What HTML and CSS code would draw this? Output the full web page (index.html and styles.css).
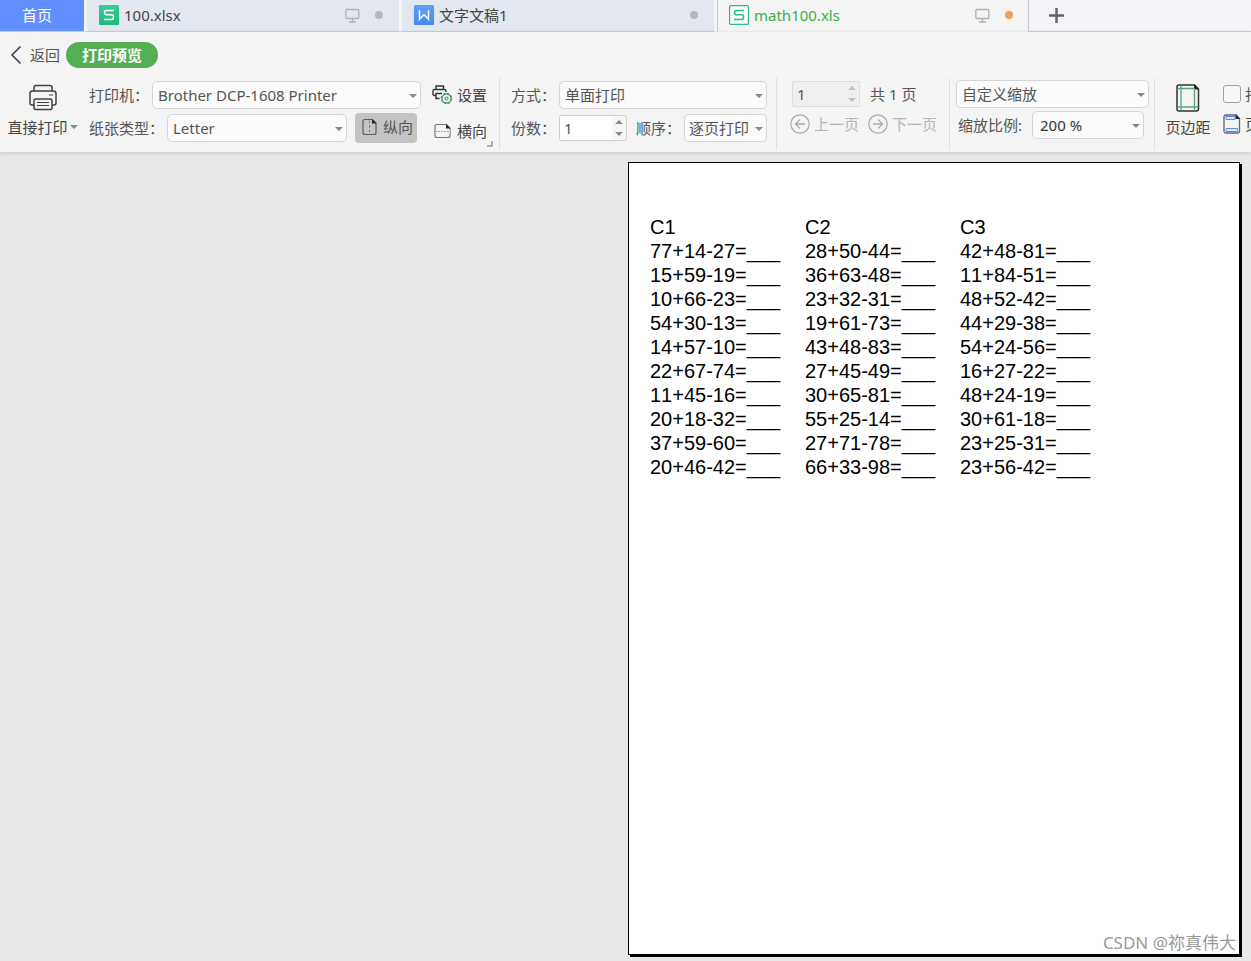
FILE: index.html
```html
<!DOCTYPE html>
<html lang="zh-CN">
<head>
<meta charset="utf-8">
<meta name="viewport" content="width=device-width, initial-scale=1">
<title>打印预览 - math100.xls</title>
<link rel="stylesheet" href="styles.css">
</head>
<body>
<nav class="tabs" aria-label="文档">
  <a class="tab tab-home" href="#home">首页</a>
  <a class="tab tab-doc" href="#doc1">
    <svg class="tab-logo" width="20" height="20" viewBox="0 0 20 20"><defs><linearGradient id="g1" x2="0" y2="1"><stop stop-color="#36cf93"/><stop offset="1" stop-color="#20b97b"/></linearGradient></defs><rect width="20" height="20" rx="1" fill="url(#g1)"/><path d="M15 5.500H7.500Q5.500 5.500 5.500 7.600Q5.500 9.800 7.500 9.800H12.500Q14.500 9.800 14.500 12Q14.500 14.500 12.500 14.500H5" fill="none" stroke="#fff" stroke-width="1.500"/></svg>
    <span class="tab-name">100.xlsx</span>
    <svg class="tab-screen" width="15" height="15" viewBox="0 0 15 15" fill="none" stroke="#b0b4be" stroke-width="1.300"><rect x=".8" y="1.500" width="13" height="9" rx="1"/><path d="M7.500 10.500v3M4 14h7"/></svg>
    <span class="dot"></span>
  </a>
  <a class="tab tab-doc" href="#doc2">
    <svg class="tab-logo" width="20" height="20" viewBox="0 0 20 20"><defs><linearGradient id="g2" x2="0" y2="1"><stop stop-color="#5aa0fa"/><stop offset="1" stop-color="#4589f0"/></linearGradient></defs><rect width="20" height="20" rx="1" fill="url(#g2)"/><path d="M5.500 5v9.300L10 9.500l4.500 4.800V5" fill="none" stroke="#fff" stroke-width="1.500"/></svg>
    <span class="tab-name">文字文稿1</span>
    <span class="dot"></span>
  </a>
  <a class="tab tab-active" href="#doc3" aria-current="page">
    <svg class="tab-logo" width="20" height="20" viewBox="0 0 20 20" fill="none" stroke="#28bd80"><rect x=".6" y=".6" width="18.800" height="18.800" rx="1" fill="#fff" stroke-width="1.200"/><path d="M15 5.500H7.500Q5.500 5.500 5.500 7.600Q5.500 9.800 7.500 9.800H12.500Q14.500 9.800 14.500 12Q14.500 14.500 12.500 14.500H5" stroke-width="1.500"/></svg>
    <span class="tab-name">math100.xls</span>
    <svg class="tab-screen" width="15" height="15" viewBox="0 0 15 15" fill="none" stroke="#b0b0b0" stroke-width="1.300"><rect x=".8" y="1.500" width="13" height="9" rx="1"/><path d="M7.500 10.500v3M4 14h7"/></svg>
    <span class="dot dot-unsaved"></span>
  </a>
  <div class="tab-rest">
    <button class="plain" type="button" aria-label="新建标签"><svg width="15" height="15" viewBox="0 0 15 15"><path d="M7.500 0v15M0 7.500h15" stroke="#606266" stroke-width="2.400"/></svg></button>
  </div>
</nav>

<header class="ribbon">
  <div class="crumbs">
    <button class="plain back" type="button"><svg width="12" height="20" viewBox="0 0 12 20"><path d="M10.500 1.500L2 10l8.500 8.500" fill="none" stroke="#3c3c3c" stroke-width="1.500"/></svg>返回</button>
    <button class="mode" type="button">打印预览</button>
  </div>
  <div class="tools">
    <button class="plain big big-print" type="button">
      <svg width="28" height="28" viewBox="0 0 28 28" fill="none" stroke="#414141" stroke-width="1.500"><path d="M5 7V3.500Q5 1.500 7 1.500H21Q23 1.500 23 3.500V7M5 21H3Q1 21 1 19V9.500Q1 7 3.500 7H24.500Q27 7 27 9.500V19Q27 21 25 21H23"/><rect x="5" y="15" width="18" height="10.500" rx="1.500"/><path d="M8 18.500h12M8 21.500h12M20 11h4" stroke-width="1.200"/></svg>
      <span class="with-arrow">直接打印<i class="arrow"></i></span>
    </button>

    <div class="group group-printer">
      <div class="row">
        <label class="label-printer" for="printer">打印机：</label>
        <span class="select grow"><select id="printer"><option>Brother DCP-1608 Printer</option></select><i class="arrow"></i></span>
      </div>
      <div class="row">
        <label class="label-paper" for="paper">纸张类型：</label>
        <span class="select select-paper"><select id="paper"><option>Letter</option></select><i class="arrow"></i></span>
        <button class="portrait" type="button" aria-pressed="true"><svg width="16" height="18" viewBox="0 0 16 18" fill="none"><path d="M3 1.500H10.500L14 5V14.500Q14 16.500 12 16.500H3Q1 16.500 1 14.500V3.500Q1 1.500 3 1.500Z" stroke="#5b5b5b" stroke-width="1.200"/><path d="M10 1L14.500 5.500H10Z" fill="#222"/><path d="M7.500 2.500v13" stroke="#4d9c70" stroke-dasharray="3 1.500"/></svg>纵向</button>
      </div>
    </div>

    <div class="group group-setup">
      <button class="plain item" type="button"><svg width="21" height="20" viewBox="0 0 21 20" fill="none"><g stroke="#333" stroke-width="1.400"><path d="M4 4.500V1H11.500V4.500M4 10.500H2.500Q1 10.500 1 9V6Q1 4.500 2.500 4.500H12.500Q14 4.500 14 6V7"/><path d="M10 8.500H4V13.500H7.500"/></g><g stroke="#4b9c6d"><circle cx="14.500" cy="13.500" r="4.500" stroke-width="1.300"/><circle cx="14.500" cy="13.500" r="1.500" stroke-width="1.200"/><circle cx="14.500" cy="13.500" r="5.300" stroke-dasharray="2.080 2.080" stroke-width="1.200"/></g></svg>设置</button>
      <button class="plain item item-landscape" type="button"><svg width="21" height="16" viewBox="0 0 21 16" fill="none"><path d="M5 1.500H14.500L18 5V12.500Q18 14.500 16 14.500H5Q3 14.500 3 12.500V3.500Q3 1.500 5 1.500Z" stroke="#777" stroke-width="1.200"/><path d="M3.700 8.500h14" stroke="#f4f4f4" stroke-width="3"/><path d="M14 1L18.500 5.500H14Z" fill="#222"/><path d="M3 8.500h16" stroke="#83b698" stroke-dasharray="2 1"/></svg>横向</button>
      <button class="plain launcher" type="button" aria-label="更多设置"><svg width="6" height="6" viewBox="0 0 6 6"><path d="M5 0v5H0" fill="none" stroke="#999" stroke-width="1.500"/></svg></button>
    </div>

    <div class="group group-mode">
      <div class="row">
        <label class="label-short" for="side">方式：</label>
        <span class="select grow"><select id="side"><option>单面打印</option></select><i class="arrow"></i></span>
      </div>
      <div class="row">
        <label class="label-short" for="copies">份数：</label>
        <span class="spin"><input id="copies" type="text" value="1"><span class="steps"><button type="button" aria-label="增加份数"><i class="arrow arrow-up"></i></button><button type="button" aria-label="减少份数"><i class="arrow"></i></button></span></span>
        <label class="label-short label-order" for="order">顺序：</label>
        <span class="select grow select-order"><select id="order"><option>逐页打印</option></select><i class="arrow"></i></span>
      </div>
    </div>

    <div class="group group-pages">
      <div class="row row-indent">
        <span class="spin spin-off"><input type="text" value="1" aria-label="页码" disabled><span class="steps"><button type="button" aria-label="后翻" disabled><i class="arrow arrow-up"></i></button><button type="button" aria-label="前翻" disabled><i class="arrow"></i></button></span></span>
        <span class="page-count">共 1 页</span>
      </div>
      <div class="row pager">
        <button class="plain turn" type="button" disabled><svg width="20" height="20" viewBox="0 0 20 20" fill="none" stroke="#adadad" stroke-width="1.300"><circle cx="10" cy="10" r="9.200"/><path d="M15 10H5.500M10 5.500L5.500 10l4.500 4.500"/></svg>上一页</button>
        <button class="plain turn" type="button" disabled><svg width="20" height="20" viewBox="0 0 20 20" fill="none" stroke="#adadad" stroke-width="1.300"><circle cx="10" cy="10" r="9.200"/><path d="M5 10h9.500M10 5.500l4.500 4.500-4.500 4.500"/></svg>下一页</button>
      </div>
    </div>

    <div class="group group-zoom">
      <div class="row">
        <span class="select grow"><select aria-label="缩放方式"><option>自定义缩放</option></select><i class="arrow"></i></span>
      </div>
      <div class="row row-scale">
        <label class="label-scale" for="scale">缩放比例:</label>
        <span class="select select-scale"><select id="scale"><option>200 %</option></select><i class="arrow"></i></span>
      </div>
    </div>

    <button class="plain big big-margin" type="button">
      <svg width="24" height="28" viewBox="0 0 24 28" fill="none"><path d="M3 1H18.500L22.500 5V25Q22.500 27 20.500 27H3Q1 27 1 25V3Q1 1 3 1Z" stroke="#333" stroke-width="1.500"/><path d="M18 0L23 5.500H18Z" fill="#222"/><path d="M5 1.500v25M18.500 5v21.500M2 4.500h17M2 23h20" stroke="#58a578" stroke-width="1.300"/></svg>
      <span>页边距</span>
    </button>

    <div class="group group-options">
      <label class="check"><input type="checkbox">打印网格线</label>
      <button class="plain item item-header" type="button"><svg width="18" height="20" viewBox="0 0 18 20" fill="none"><path d="M3 1H13L16.500 4.500V17Q16.500 19 14.500 19H3Q1 19 1 17V3Q1 1 3 1Z" stroke="#666" stroke-width="1.300"/><path d="M12.500 0L17 5H12.500Z" fill="#222"/><path d="M3 2.500h9v3H3zM3 14.500h11.500v3H3z" fill="#dce8fc" stroke="#5b8de0"/></svg>页眉页脚</button>
    </div>
  </div>
</header>

<main class="preview">
  <section class="paper" aria-label="第 1 页">
    <table class="sheet">
      <thead><tr><th>C1</th><th>C2</th><th>C3</th></tr></thead>
      <tbody>
        <tr><td>77+14-27=___</td><td>28+50-44=___</td><td>42+48-81=___</td></tr>
        <tr><td>15+59-19=___</td><td>36+63-48=___</td><td>11+84-51=___</td></tr>
        <tr><td>10+66-23=___</td><td>23+32-31=___</td><td>48+52-42=___</td></tr>
        <tr><td>54+30-13=___</td><td>19+61-73=___</td><td>44+29-38=___</td></tr>
        <tr><td>14+57-10=___</td><td>43+48-83=___</td><td>54+24-56=___</td></tr>
        <tr><td>22+67-74=___</td><td>27+45-49=___</td><td>16+27-22=___</td></tr>
        <tr><td>11+45-16=___</td><td>30+65-81=___</td><td>48+24-19=___</td></tr>
        <tr><td>20+18-32=___</td><td>55+25-14=___</td><td>30+61-18=___</td></tr>
        <tr><td>37+59-60=___</td><td>27+71-78=___</td><td>23+25-31=___</td></tr>
        <tr><td>20+46-42=___</td><td>66+33-98=___</td><td>23+56-42=___</td></tr>
      </tbody>
    </table>
  </section>
  <span class="watermark">CSDN @祢真伟大</span>
</main>
</body>
</html>
```

FILE: styles.css
```css
* { box-sizing: border-box; }

body {
  margin: 0;
  min-height: 100vh;
  display: flex;
  flex-direction: column;
  overflow-x: hidden;
  background: #e8e8e8;
  color: #555;
  font: 15px/20px "Noto Sans", "Noto Sans CJK SC", sans-serif;
}

button, input, select { font: inherit; color: inherit; }
svg { display: block; flex: none; }

.plain {
  display: flex;
  align-items: center;
  padding: 0;
  border: 0;
  background: none;
  white-space: nowrap;
}

/* Document tabs */
.tabs {
  display: flex;
  height: 32px;
  background: #f3f4f9;
}

.tab {
  display: flex;
  align-items: center;
  border-bottom: 1px solid #c3c7d9;
  color: #444;
  text-decoration: none;
  white-space: nowrap;
}

.tab-home {
  flex: none;
  justify-content: center;
  width: 84px;
  padding: 0 10px 2px 0;
  background: #618eff;
  color: #fff;
}

.tab-doc {
  flex: 0 1 315px;
  padding: 0 20px 1px 12px;
  border-left: 3px solid #f3f4f9;
  background: #e3e7f0;
}

.tab-active {
  flex: 0 1 312px;
  margin-left: 3px;
  padding: 0 15px 2px 11px;
  border: solid #c3c7d9;
  border-width: 0 1px;
  background: #f4f4f4;
  color: #3dae49;
}

.tab-doc .dot { margin-right: -4px; }
.tab-logo { margin-right: 5px; }
.tab-name { flex: 1; padding-bottom: 1px; }
.tab-screen { margin-right: 15px; }

.dot {
  width: 8px;
  height: 8px;
  border-radius: 50%;
  background: #b4b8c1;
}

.dot-unsaved { background: #e7a05a; }

.tab-rest {
  flex: 1;
  display: flex;
  align-items: center;
  padding: 0 0 1px 20px;
  border-bottom: 1px solid #c3c7d9;
}

/* Ribbon */
.ribbon {
  position: relative;
  background: #f4f4f4;
  box-shadow: 0 1px 4px #c8c8c8;
}

.crumbs {
  display: flex;
  align-items: center;
  gap: 6px;
  height: 46px;
  padding-left: 10px;
}

.back { gap: 8px; }

.mode {
  height: 26px;
  padding: 0 16px;
  border: 0;
  border-radius: 13px;
  background: #54ae54;
  color: #fff;
  font-weight: 700;
  line-height: 20px;
}

.tools {
  display: flex;
  height: 74px;
  overflow: hidden;
  white-space: nowrap;
}

.tools > * { flex: none; }

.big {
  flex-direction: column;
  align-items: center;
  justify-content: flex-start;
  gap: 5px;
  padding-top: 6px;
  color: #444;
}

.big-print { width: 85px; }
.with-arrow { display: flex; align-items: center; gap: 2px; }

.arrow {
  flex: none;
  border: solid transparent;
  border-width: 4px 4px 0;
  border-top-color: #888;
}

.arrow-up { transform: rotate(180deg); }

.group {
  display: flex;
  flex-direction: column;
  gap: 5px;
  padding-top: 3px;
}

.row { display: flex; align-items: center; height: 28px; }
.grow { flex: 1; }

.group-printer { width: 336px; padding-left: 4px; }
.label-printer { width: 63px; }
.label-paper { width: 78px; }

.select {
  position: relative;
  display: flex;
  height: 28px;
}

.select select {
  appearance: none;
  flex: 1;
  min-width: 0;
  padding: 0 16px 0 5px;
  border: 1px solid #d6d6d6;
  border-radius: 5px;
  background: #fbfbfb;
}

.select .arrow {
  position: absolute;
  right: 4px;
  top: 13px;
  pointer-events: none;
}

.select-paper { width: 180px; }

.portrait {
  display: flex;
  align-items: center;
  gap: 5px;
  height: 30px;
  margin-left: 8px;
  padding: 0 4px 2px 7px;
  border: 0;
  border-radius: 4px;
  background: #c4c4c4;
}

.group-setup {
  position: relative;
  width: 78px;
  padding-left: 11px;
}

.item { gap: 4px; height: 28px; color: #444; }
.item-landscape { height: 34px; }

.launcher {
  position: absolute;
  right: 6px;
  bottom: 5px;
}

.group-mode,
.group-pages,
.group-zoom,
.big-margin {
  background: linear-gradient(#e0e0e0, #e0e0e0) 0 0 / 1px 72px no-repeat;
}

.group-mode { width: 268px; padding-left: 12px; }
.label-short { width: 48px; overflow: hidden; }
.label-order { margin-left: 9px; }
.select-order select { padding: 0 10px 0 4px; }

.spin {
  display: flex;
  width: 68px;
  height: 26px;
  border: 1px solid #cfcfcf;
  border-radius: 2px;
  background: #fff;
}

.spin input {
  flex: 1;
  min-width: 0;
  padding: 0 4px;
  border: 0;
  background: none;
}

.steps {
  display: flex;
  flex-direction: column;
  width: 14px;
  background: #f6f6f6;
}

.steps button {
  flex: 1;
  display: flex;
  align-items: center;
  justify-content: center;
  padding: 0;
  border: 0;
  background: none;
}

.spin-off { background: #efefef; border-color: #dcdcdc; }
.spin-off .steps { background: none; }
.spin-off .arrow { border-top-color: #c0c0c0; }

.group-pages { width: 173px; padding: 2px 0 0 14px; gap: 2px; margin-left: 9px; }
.row-indent { padding-left: 2px; }
.page-count { margin-left: 10px; }
.pager { gap: 9px; }
.turn { gap: 4px; color: #b5b5b5; }

.group-zoom { width: 205px; padding: 2px 5px 0 7px; gap: 3px; }
.row-scale { padding-left: 2px; }
.label-scale { width: 74px; }
.select-scale { width: 112px; }
.select-scale select { padding-left: 7px; color: #333; }

.big-margin { width: 68px; }

.group-options { padding: 6px 0 0 1px; gap: 3px; }
.check { display: flex; align-items: center; gap: 4px; height: 20px; }

.check input {
  appearance: none;
  width: 18px;
  height: 18px;
  margin: 0;
  border: 1px solid #a0a0a0;
  border-radius: 3px;
  background: #f8f8f8;
}

.item-header { height: 34px; }

/* Page preview */
.preview {
  position: relative;
  flex: 1;
  display: flex;
  align-items: flex-start;
  justify-content: flex-end;
  padding: 10px 11px 6px;
}

.paper {
  width: 612px;
  aspect-ratio: 612 / 793;
  padding: 52px 21px;
  border: 1px solid #000;
  background: #fff;
  box-shadow: 2px 2px #000;
}

.sheet {
  border-collapse: collapse;
  color: #000;
  font: 20px/24px "Liberation Sans", Arial, sans-serif;
  font-kerning: none;
}

.sheet th,
.sheet td {
  min-width: 155px;
  padding: 0 24px 0 0;
  font-weight: 400;
  text-align: left;
}

.watermark {
  position: absolute;
  right: 15px;
  bottom: 6px;
  color: #999;
  font-size: 17px;
  line-height: 24px;
}
```
